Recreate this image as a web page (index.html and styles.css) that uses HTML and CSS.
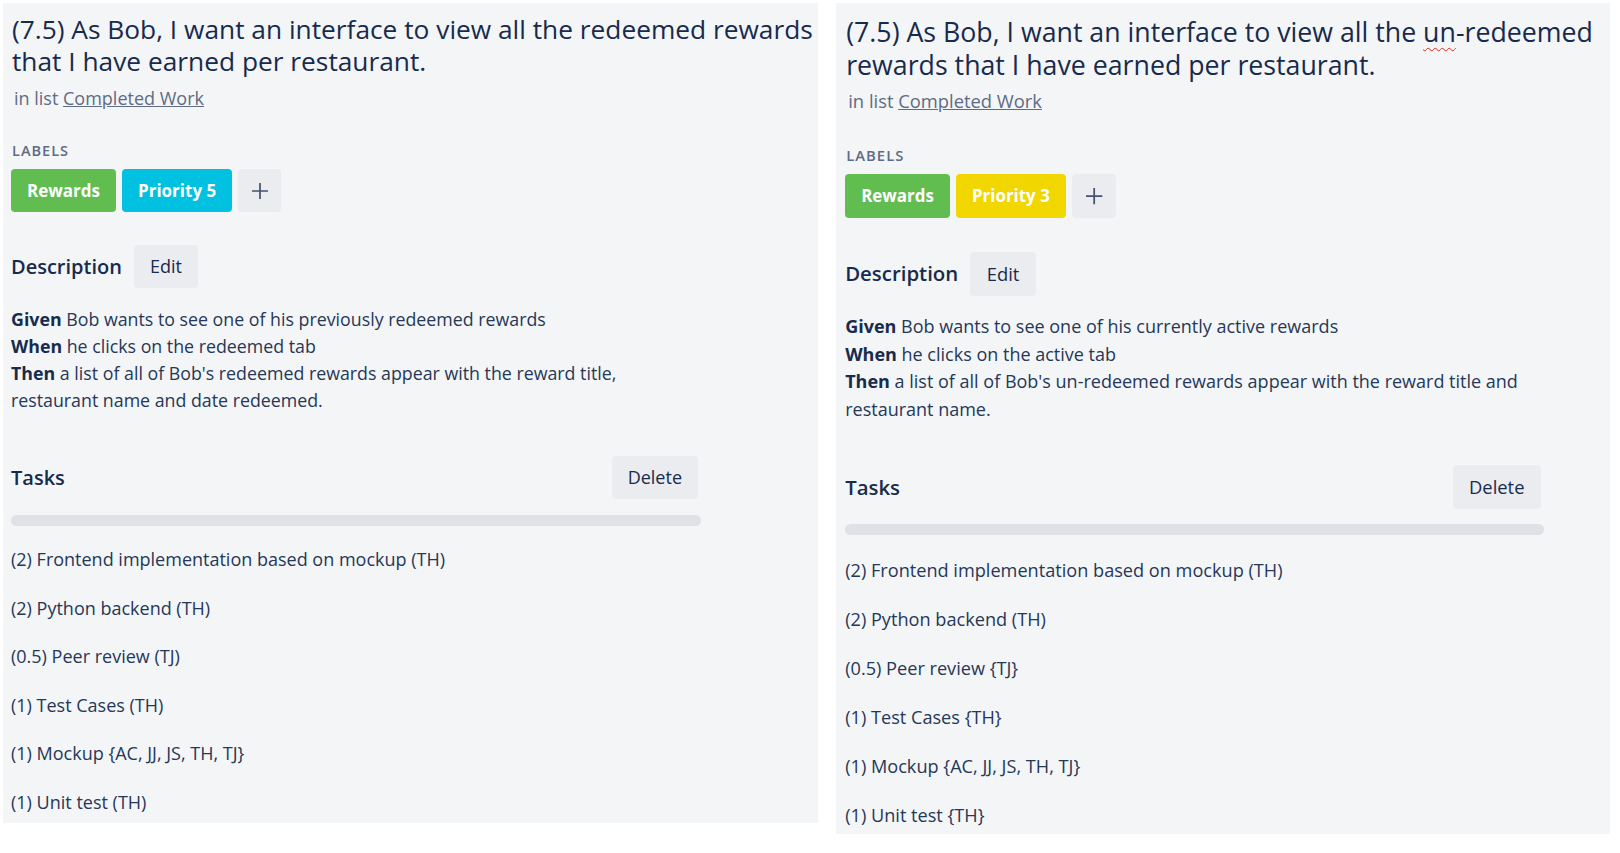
FILE: index.html
```html
<!DOCTYPE html>
<html lang="en">
<head>
<meta charset="utf-8">
<title>Card details</title>
<link rel="stylesheet" href="styles.css">
</head>
<body>
<div class="page">
  <section class="card card-left">
    <h2 class="title">(7.5) As Bob, I want an interface to view all the redeemed rewards that I have earned per restaurant.</h2>
    <p class="meta">in list <a class="list-link" href="#">Completed Work</a></p>
    <h4 class="labels-heading">Labels</h4>
    <div class="labels">
      <span class="label label-green">Rewards</span>
      <span class="label label-blue">Priority 5</span>
      <span class="add-label"><svg viewBox="0 0 18 18" width="18" height="18"><path d="M9 1v16M1 9h16" stroke="#42526e" stroke-width="1.7" fill="none"/></svg></span>
    </div>
    <div class="section-head desc-head">
      <h3 class="section-title">Description</h3>
      <span class="btn">Edit</span>
    </div>
    <div class="desc">
      <p><b>Given</b> Bob wants to see one of his previously redeemed rewards<br>
      <b>When</b> he clicks on the redeemed tab<br>
      <b>Then</b> a list of all of Bob's redeemed rewards appear with the reward title, restaurant name and date redeemed.</p>
    </div>
    <div class="section-head tasks-head">
      <h3 class="section-title">Tasks</h3>
      <span class="btn">Delete</span>
    </div>
    <div class="progress"></div>
    <ul class="tasks">
      <li>(2) Frontend implementation based on mockup (TH)</li>
      <li>(2) Python backend (TH)</li>
      <li>(0.5) Peer review (TJ)</li>
      <li>(1) Test Cases (TH)</li>
      <li>(1) Mockup {AC, JJ, JS, TH, TJ}</li>
      <li>(1) Unit test (TH)</li>
    </ul>
  </section>
  <section class="card card-right">
    <h2 class="title">(7.5) As Bob, I want an interface to view all the <span class="misspell">un</span>-redeemed rewards that I have earned per restaurant.</h2>
    <p class="meta">in list <a class="list-link" href="#">Completed Work</a></p>
    <h4 class="labels-heading">Labels</h4>
    <div class="labels">
      <span class="label label-green">Rewards</span>
      <span class="label label-yellow">Priority 3</span>
      <span class="add-label"><svg viewBox="0 0 18 18" width="18" height="18"><path d="M9 1v16M1 9h16" stroke="#42526e" stroke-width="1.7" fill="none"/></svg></span>
    </div>
    <div class="section-head desc-head">
      <h3 class="section-title">Description</h3>
      <span class="btn">Edit</span>
    </div>
    <div class="desc">
      <p><b>Given</b> Bob wants to see one of his currently active rewards<br>
      <b>When</b> he clicks on the active tab<br>
      <b>Then</b> a list of all of Bob's un-redeemed rewards appear with the reward title and restaurant name.</p>
    </div>
    <div class="section-head tasks-head">
      <h3 class="section-title">Tasks</h3>
      <span class="btn">Delete</span>
    </div>
    <div class="progress"></div>
    <ul class="tasks">
      <li>(2) Frontend implementation based on mockup (TH)</li>
      <li>(2) Python backend (TH)</li>
      <li>(0.5) Peer review {TJ}</li>
      <li>(1) Test Cases {TH}</li>
      <li>(1) Mockup {AC, JJ, JS, TH, TJ}</li>
      <li>(1) Unit test {TH}</li>
    </ul>
  </section>
</div>
</body>
</html>
```
FILE: styles.css
```css
* { box-sizing: border-box; }
html, body { margin: 0; padding: 0; background: #ffffff; }
body {
  font-family: "Open Sans", "Noto Sans", "Liberation Sans", sans-serif;
  color: #172b4d;
}
.page {
  display: flex;
  align-items: flex-start;
  padding: 3px 0 0 3px;
  gap: 18px;
}
.card {
  background: #f4f5f7;
  overflow: hidden;
  padding: 10px 0 0 8px;
}
.card-left { width: 815px; height: 820px; }
.card-right { width: 759px; height: 815px; zoom: 1.02; padding: 13px 0 0 9px; }

.title {
  margin: 0 0 0 1px;
  font-size: 26.3px;
  line-height: 32px;
  font-weight: 500;
  color: #172b4d;
}
.card-right .title { font-size: 26.2px; }
.misspell {
  text-decoration: underline wavy #e0241b;
  text-decoration-thickness: 1px;
  text-underline-offset: 5px;
}
.meta {
  margin: 9px 0 0 3px;
  font-size: 18px;
  line-height: 24px;
  color: #5e6c84;
}
.card-right .meta { margin-top: 7px; }
.list-link { color: #5e6c84; text-decoration: underline; }
.labels-heading {
  margin: 31px 0 0 1px;
  font-size: 14.5px;
  line-height: 20px;
  font-weight: 600;
  letter-spacing: 0.07em;
  text-transform: uppercase;
  color: #5e6c84;
}
.card-right .labels-heading { margin-top: 31px; }
.labels {
  display: flex;
  gap: 6px;
  margin-top: 8px;
}
.card-right .labels { margin-top: 9px; }
.label {
  height: 43px;
  line-height: 43px;
  padding: 0 16px;
  border-radius: 4px;
  color: #ffffff;
  font-weight: 700;
  font-size: 17px;
}
.card-right .label { font-size: 16.6px; padding: 0 15.7px; }
.label-green { background: #61bd4f; }
.label-blue { background: #00c2e0; }
.label-yellow { background: #f2d600; }
.add-label {
  width: 43px;
  height: 43px;
  border-radius: 4px;
  background: #ebecf0;
  display: flex;
  align-items: center;
  justify-content: center;
}
.section-head {
  display: flex;
  align-items: center;
  width: 687px;
}
.card-right .section-head { width: 682px; }
.desc-head { margin-top: 33px; gap: 12px; }
.tasks-head { margin-top: 42px; justify-content: space-between; }
.card-right .tasks-head { margin-top: 41px; }
.section-title {
  margin: 0;
  font-size: 20px;
  line-height: 28px;
  font-weight: 600;
  color: #172b4d;
}
.btn {
  height: 43px;
  line-height: 43px;
  padding: 0 16px;
  border-radius: 4px;
  background: #ebecf0;
  color: #172b4d;
  font-size: 18px;
}
.desc {
  margin-top: 18px;
  width: 680px;
  font-size: 17.8px;
  line-height: 27px;
  color: #253858;
}
.card-right .desc { margin-top: 17px; font-size: 17.65px; }
.desc p { margin: 0; }
.desc b { color: #172b4d; font-weight: 700; }
.progress {
  margin-top: 16px;
  width: 690px;
  height: 11px;
  border-radius: 6px;
  background: #dfe1e6;
}
.card-right .progress { width: 685px; margin-top: 15px; }
.tasks {
  list-style: none;
  margin: 9px 0 0;
  padding: 0;
}
.card-right .tasks { margin-top: 10px; }
.tasks li {
  height: 48.6px;
  line-height: 48.6px;
  font-size: 18px;
  color: #253858;
}
.card-right .tasks li { height: 48.2px; line-height: 48.2px; font-size: 17.8px; }
```
